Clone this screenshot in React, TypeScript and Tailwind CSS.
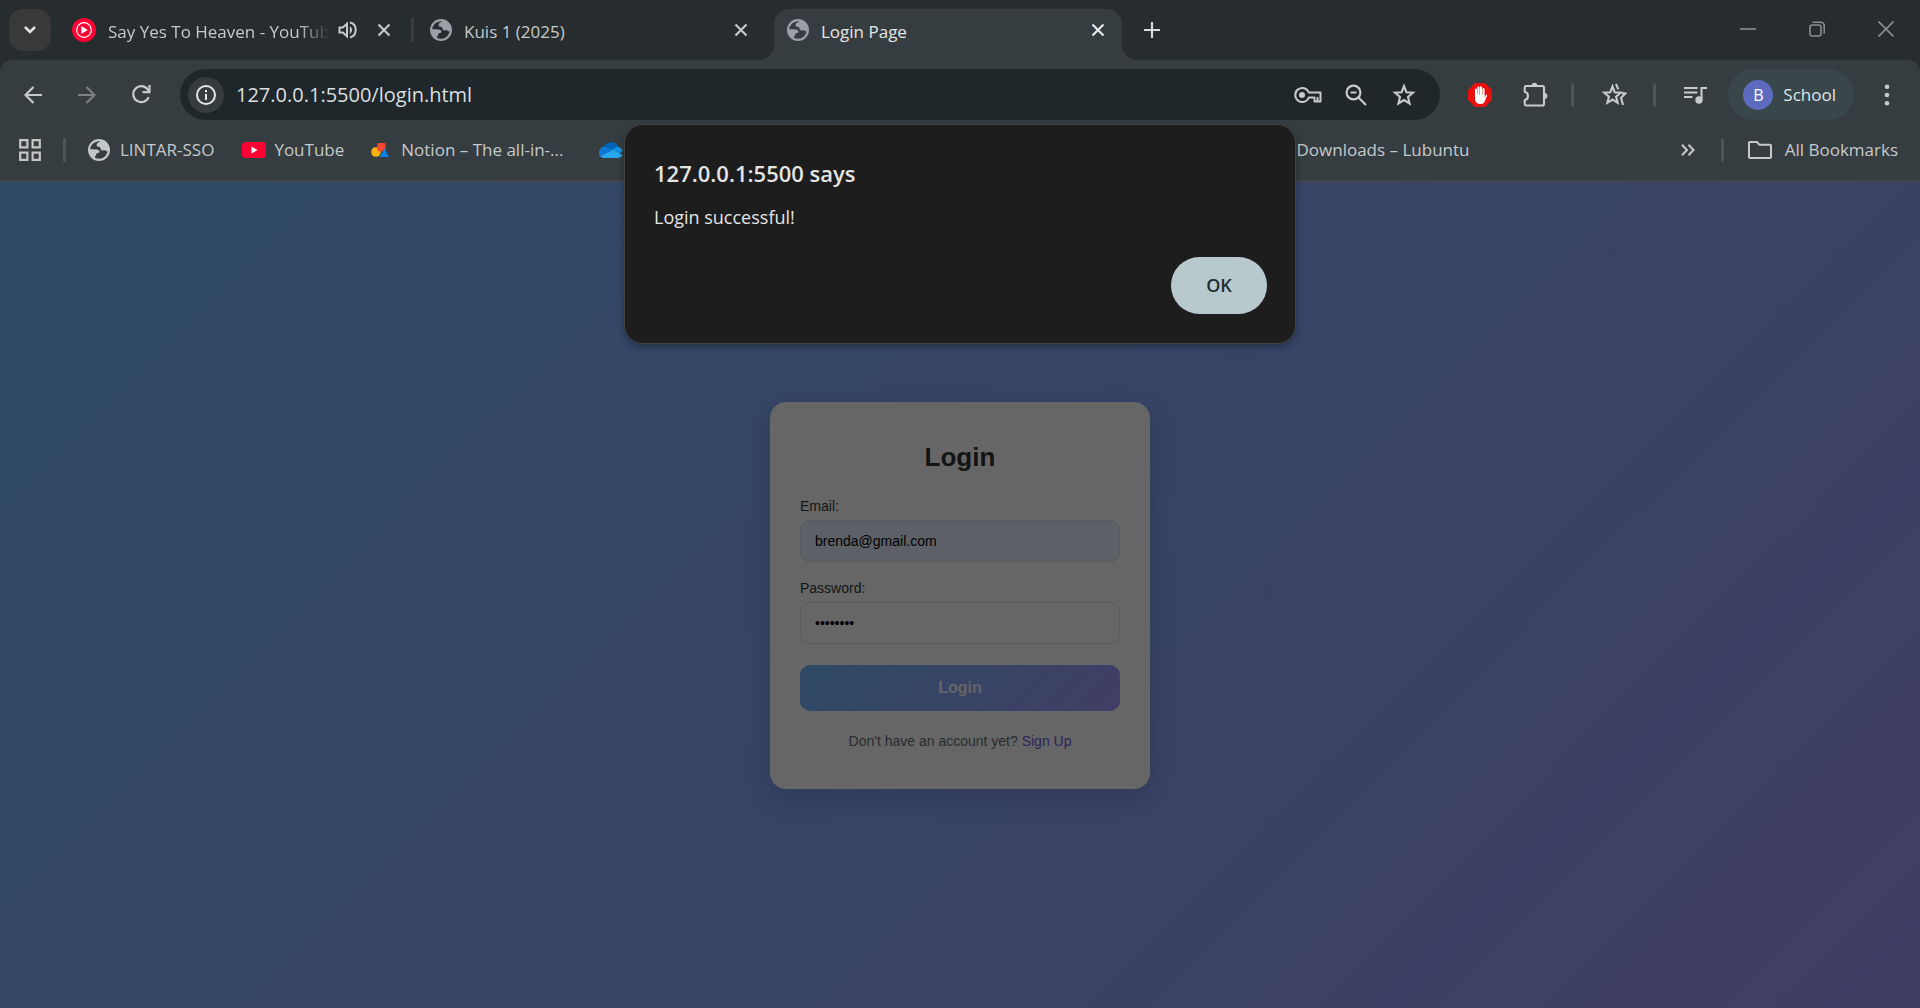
import type { ReactNode } from 'react'

type IconProps = { className?: string }

const Globe = ({ className = '' }: IconProps) => (
  <svg viewBox="0 0 22 22" className={`size-[22px] shrink-0 ${className}`} fill="currentColor" aria-hidden="true">
    <circle cx="11" cy="11" r="9.900" fill="none" stroke="currentColor" strokeWidth="2.200" />
    <path d="M12.500 1.500C12.300 3.300 9 3.500 8.600 5.600 8.300 7.600 9.800 8 11.300 8c1.500 0 .7 2.600 2.700 3.400 1.300.5 2.700-.6 3.500.3.500.6 1.500.9 3 .8A9.800 9.800 0 0 0 12.500 1.500Z" />
    <path d="M1.500 10.200h4.800c2.900 0 5.200.8 5.200 2.400 0 1.300-1.200 1.500-2.400 1.700-1.300.2-.4 2-1.600 2.600-.8.4-.4 2 0 3.200A9.800 9.800 0 0 1 1.500 10.200Z" />
  </svg>
)

const Close = ({ className = '' }: IconProps) => (
  <svg viewBox="0 0 14 14" className={`size-[14px] ${className}`} stroke="currentColor" strokeWidth="2.200" aria-hidden="true">
    <path d="M1.500 1.500l11 11M12.500 1.500l-11 11" />
  </svg>
)

const Arrow = ({ className = '' }: IconProps) => (
  <svg viewBox="0 0 18 18" className={`size-[18px] ${className}`} fill="none" stroke="currentColor" strokeWidth="2.200" aria-hidden="true">
    <path d="M18 9H2M9.500 1 1.500 9l8 8" />
  </svg>
)

const Separator = () => <div className="h-6 w-[3px] shrink-0 rounded-full bg-[#4d5558]" />

function IconButton({ label, children, className = '' }: { label: string; children: ReactNode; className?: string }) {
  return (
    <button type="button" aria-label={label} className={`flex h-[51px] shrink-0 items-center justify-center text-[#c5cbcd] ${className}`}>
      {children}
    </button>
  )
}

function TabStrip() {
  return (
    <div className="flex h-[60px] bg-[#272c2f] text-[17px] leading-6 text-[#c5cacb]">
      <button type="button" aria-label="Search tabs" className="mt-[9px] ml-[9px] flex size-[42px] shrink-0 items-center justify-center rounded-[14px] bg-[#3a3939] text-[#e4e4e4]">
        <svg viewBox="0 0 12 8" className="h-2 w-3" fill="none" stroke="currentColor" strokeWidth="2.500" aria-hidden="true">
          <path d="M1 1l5 5 5-5" />
        </svg>
      </button>
      <div className="ml-[9px] flex h-[60px] min-w-0 basis-[351px] items-center pr-5 pl-3">
        <svg viewBox="0 0 24 24" className="size-6 shrink-0" aria-hidden="true">
          <circle cx="12" cy="12" r="12" fill="#ff0033" />
          <circle cx="12" cy="12" r="7.300" fill="none" stroke="#fff" strokeWidth="1.200" />
          <path d="M9.300 8v8l6.400-4z" fill="#fff" />
        </svg>
        <span className="ml-3 min-w-0 flex-1 overflow-hidden pt-1 whitespace-nowrap [mask-image:linear-gradient(to_right,black_86%,transparent)]">
          Say Yes To Heaven - YouTub
        </span>
        <button type="button" aria-label="Mute tab" className="ml-2">
          <svg viewBox="0 0 20 18" className="h-[18px] w-5" fill="none" stroke="currentColor" strokeWidth="2" aria-hidden="true">
            <path d="M1.500 6.500v5h3.300L9 15.200V2.800L4.800 6.500z" />
            <path d="M11.800 5.300c1.600 1 2.300 2.300 2.300 3.700s-.7 2.700-2.300 3.700z" fill="currentColor" stroke="none" />
            <path d="M12 1.600c3.600.8 5.700 3.800 5.700 7.400s-2.100 6.600-5.700 7.400" />
          </svg>
        </button>
        <button type="button" aria-label="Close tab" className="ml-[19px]">
          <Close />
        </button>
      </div>
      <div className="mt-[18px] h-6 w-[3px] shrink-0 bg-[#3d3b3c]" />
      <div className="flex h-[60px] min-w-0 basis-[360px] items-center pr-[26px] pl-4">
        <Globe className="text-[#9aa0a6]" />
        <span className="ml-3 min-w-0 flex-1 truncate pt-1">Kuis 1 (2025)</span>
        <button type="button" aria-label="Close tab">
          <Close />
        </button>
      </div>
      <div className="relative mt-[9px] flex h-[51px] min-w-0 basis-[348px] items-center rounded-t-[15px] bg-[#353d40] pr-[17px] pb-[9px] pl-[13px] text-[#e6e6e6]">
        <div className="absolute bottom-0 -left-[15px] size-[15px] bg-[radial-gradient(circle_at_0_0,transparent_15px,#353d40_15px)]" />
        <div className="absolute -right-[15px] bottom-0 size-[15px] bg-[radial-gradient(circle_at_100%_0,transparent_15px,#353d40_15px)]" />
        <Globe className="text-[#9aa0a6]" />
        <span className="ml-3 min-w-0 flex-1 truncate pt-1">Login Page</span>
        <button type="button" aria-label="Close tab">
          <Close />
        </button>
      </div>
      <button type="button" aria-label="New tab" className="ml-[9px] flex h-[60px] w-[42px] shrink-0 items-center justify-center text-[#d5d9da]">
        <svg viewBox="0 0 16 16" className="size-4" stroke="currentColor" strokeWidth="2.200" aria-hidden="true">
          <path d="M8 0v16M0 8h16" />
        </svg>
      </button>
      <div className="ml-auto flex h-[58px] text-[#8b8e8f]">
        <button type="button" aria-label="Minimize" className="flex w-[69px] items-center justify-center">
          <svg viewBox="0 0 16 16" className="size-4" stroke="currentColor" strokeWidth="1.600" aria-hidden="true">
            <path d="M0 8h16" />
          </svg>
        </button>
        <button type="button" aria-label="Restore" className="flex w-[69px] items-center justify-center">
          <svg viewBox="0 0 16 16" className="size-4" fill="none" stroke="currentColor" strokeWidth="1.600" aria-hidden="true">
            <rect x="1" y="4" width="11" height="11" rx="2.200" />
            <path d="M3.500 1.200h8.300a3.400 3.400 0 0 1 3.400 3.400V12.500" />
          </svg>
        </button>
        <button type="button" aria-label="Close window" className="flex w-[69px] items-center justify-center">
          <svg viewBox="0 0 16 16" className="size-4" stroke="currentColor" strokeWidth="1.600" aria-hidden="true">
            <path d="M.5.5l15 15M15.500.5l-15 15" />
          </svg>
        </button>
      </div>
    </div>
  )
}

function Toolbar() {
  return (
    <div className="flex items-center px-[6px] pt-[9px]">
      <IconButton label="Back" className="w-[54px]">
        <Arrow />
      </IconButton>
      <IconButton label="Forward" className="w-[54px]">
        <Arrow className="rotate-180 text-[#7c8284]" />
      </IconButton>
      <IconButton label="Reload" className="w-[54px]">
        <svg viewBox="0 0 19 19" className="size-[19px]" fill="none" stroke="currentColor" strokeWidth="2.200" aria-hidden="true">
          <path d="M16.700 12.200A8 8 0 1 1 15.600 4.200L17 6" />
          <path d="M17.500 0v7.100h-7" />
        </svg>
      </IconButton>
      <div className="ml-3 flex h-[51px] min-w-0 flex-1 items-center rounded-full bg-[#1f272a] pr-3 pl-2">
        <button type="button" aria-label="View site information" className="flex size-9 shrink-0 items-center justify-center rounded-full bg-[#353c40] text-[#e3e5e6]">
          <svg viewBox="0 0 20 20" className="size-5" fill="none" stroke="currentColor" strokeWidth="2" aria-hidden="true">
            <circle cx="10" cy="10" r="9" />
            <path d="M10 9v6M10 5v2.200" />
          </svg>
        </button>
        <input
          aria-label="Address"
          defaultValue="127.0.0.1:5500/login.html"
          className="ml-3 min-w-0 flex-1 bg-transparent text-[20px] leading-7 text-[#dcdfe0] outline-none"
        />
        <IconButton label="Manage passwords" className="w-12">
          <svg viewBox="0 0 28 18" className="h-[18px] w-7" fill="none" stroke="currentColor" strokeWidth="2" aria-hidden="true">
            <path d="M14.800 6.500A7 7 0 1 0 14.800 11.500H20.500V15.500H26.500V6.500Z" strokeLinejoin="round" />
            <circle cx="8" cy="9" r="3" fill="currentColor" stroke="none" />
            <path d="M23.500 11v4" />
          </svg>
        </IconButton>
        <IconButton label="Zoom" className="w-12">
          <svg viewBox="0 0 22 22" className="size-[22px]" fill="none" stroke="currentColor" strokeWidth="2.200" aria-hidden="true">
            <circle cx="8.500" cy="8.500" r="6.900" />
            <path d="M13.500 13.500l7.500 7.500M5.500 8.500h6" />
          </svg>
        </IconButton>
        <IconButton label="Bookmark this tab" className="w-12">
          <svg viewBox="0 0 24 24" className="size-6" fill="none" stroke="currentColor" strokeWidth="2.100" aria-hidden="true">
            <path d="M12 3.200l2.400 6 6.600.5-5 4.300 1.600 6.500-5.600-3.500-5.600 3.500L8 14 3 9.700l6.600-.5z" />
          </svg>
        </IconButton>
      </div>
      <IconButton label="AdBlock" className="ml-[13px] w-[54px]">
        <svg viewBox="0 0 24 24" className="size-6" aria-hidden="true">
          <path d="M7 0h10l7 7v10l-7 7H7l-7-7V7z" fill="#e8110f" />
          <g stroke="#fff" strokeLinecap="round" strokeWidth="2.100">
            <path d="M8 14V6.500M10.500 12V4.500M13 12V4.300M15.500 13V6" />
          </g>
          <path d="M7 11.500h9.500v3l1.300-2.300c.5-.8 1.600-.4 1.300.5L16.600 18.500c-.8 1.800-2 2.500-4.100 2.500C8.700 21 7 18.500 7 15.500z" fill="#fff" />
        </svg>
      </IconButton>
      <IconButton label="Extensions" className="w-14">
        <svg viewBox="0 0 25 25" className="size-[25px]" fill="none" stroke="currentColor" strokeWidth="2.100" aria-hidden="true">
          <path d="M3.200 4H19.500Q21 4 21 5.500V22Q21 23.500 19.500 23.500H3.200Q1.700 23.500 1.700 22V18.200C6 17.200 6 10.800 1.700 9.800V5.500Q1.700 4 3.200 4Z" strokeLinejoin="round" />
          <path d="M8.700 3.500a2.800 2.800 0 0 1 5.600 0zM21.500 11a2.900 2.900 0 0 1 0 5.800z" fill="currentColor" stroke="none" />
        </svg>
      </IconButton>
      <div className="ml-2">
        <Separator />
      </div>
      <IconButton label="Saved tab groups" className="ml-[13px] w-[54px]">
        <svg viewBox="0 0 26 24" className="h-6 w-[26px]" fill="none" stroke="currentColor" strokeWidth="2.100" aria-hidden="true">
          <path d="M11.500 3.500l2.200 5.700 6.100.5-4.700 4 1.500 6.100-5.100-3.300-5.100 3.300 1.500-6.100-4.700-4 6.100-.5z" />
          <path d="M15 1l2.300 5.300M20.800 10.200l3.500.3-4.200 4.200 1.900 7.300" />
        </svg>
      </IconButton>
      <div className="ml-3">
        <Separator />
      </div>
      <IconButton label="Media controls" className="ml-3 w-[54px]">
        <svg viewBox="0 0 24 20" className="h-5 w-6" fill="none" stroke="currentColor" strokeWidth="2.100" aria-hidden="true">
          <path d="M1 3h13.500M1 7.500h13.500M1 12h8.500M18.500 15V3H24" />
          <circle cx="16" cy="15" r="3.700" fill="currentColor" stroke="none" />
        </svg>
      </IconButton>
      <button type="button" className="ml-[6px] flex h-[51px] shrink-0 items-center rounded-full bg-[#39474a] pr-[18px] pl-[15px] text-[17px] leading-6 text-[#dde6e8]">
        <span className="mr-[10px] flex size-[30px] items-center justify-center rounded-full bg-[#5c6bc0] text-base text-white">B</span>
        School
      </button>
      <IconButton label="Menu" className="ml-[6px] w-[54px]">
        <svg viewBox="0 0 6 22" className="h-[22px] w-[6px]" fill="currentColor" aria-hidden="true">
          <circle cx="3" cy="2.800" r="2.300" />
          <circle cx="3" cy="11" r="2.300" />
          <circle cx="3" cy="19.200" r="2.300" />
        </svg>
      </IconButton>
    </div>
  )
}

function Bookmark({ icon, children, className = '' }: { icon?: ReactNode; children?: ReactNode; className?: string }) {
  return (
    <a href="#" className={`flex shrink-0 items-center ${className}`}>
      {icon}
      {children}
    </a>
  )
}

function BookmarksBar() {
  return (
    <nav aria-label="Bookmarks" className="flex h-[60px] items-center overflow-hidden pr-[22px] pl-[19px] text-[17px] leading-6 whitespace-nowrap text-[#c5c9ca]">
      <button type="button" aria-label="Apps" className="mr-[22px] text-[#c8c6c5]">
        <svg viewBox="0 0 22 22" className="size-[22px]" fill="none" stroke="currentColor" strokeWidth="2.200" aria-hidden="true">
          <path d="M1.200 1.200h7.200v7.200H1.200zM13.600 1.200h7.200v7.200h-7.200zM1.200 13.600h7.200v7.200H1.200zM13.600 13.600h7.200v7.200h-7.200z" />
        </svg>
      </button>
      <Separator />
      <Bookmark className="ml-[22px] gap-[10px]" icon={<Globe className="text-[#c3c6cb]" />}>
        LINTAR-SSO
      </Bookmark>
      <Bookmark
        className="ml-7 gap-2"
        icon={
          <svg viewBox="0 0 24 16" className="h-4 w-6" aria-hidden="true">
            <rect width="24" height="16" rx="3.500" fill="#ff0033" />
            <path d="M9.500 4.500v7l6-3.500z" fill="#fff" />
          </svg>
        }
      >
        YouTube
      </Bookmark>
      <Bookmark
        className="ml-[27px] gap-3"
        icon={
          <svg viewBox="0 0 18 16" className="h-4 w-[18px]" aria-hidden="true">
            <circle cx="5" cy="10" r="4.800" fill="#ffb110" />
            <rect x="6.300" y="1" width="8.200" height="8.200" rx="1" fill="#f64932" />
            <path d="M13.500 6.500 18 15H8.500z" fill="#097fe8" />
          </svg>
        }
      >
        Notion – The all-in-...
      </Bookmark>
      <Bookmark
        className="ml-9"
        icon={
          <svg viewBox="0 0 24 16" className="h-4 w-6" role="img" aria-label="OneDrive">
            <path d="M4.500 6A8 8 0 0 1 19.500 5L15 11z" fill="#0364b8" />
            <path d="M0 11a5.500 5.500 0 0 1 8-5.500L18 11 4 16A5 5 0 0 1 0 11z" fill="#0f78d4" />
            <path d="M12 8l6-3a5.300 5.300 0 0 1 5.500 4L20 12z" fill="#1490df" />
            <path d="M1.500 14 14 8.300 23.500 13A4.500 4.500 0 0 1 19.500 16H5.200A5 5 0 0 1 1.500 14z" fill="#28a8ea" />
          </svg>
        }
      />
      <Bookmark className="ml-[673px]">Downloads – Lubuntu</Bookmark>
      <button type="button" aria-label="More bookmarks" className="mr-[26px] ml-auto">
        <svg viewBox="0 0 14 12" className="h-3 w-[14px]" fill="none" stroke="currentColor" strokeWidth="2" aria-hidden="true">
          <path d="M1 .8 6 6l-5 5.200M7.500.8l5 5.200-5 5.200" />
        </svg>
      </button>
      <Separator />
      <Bookmark
        className="ml-6 gap-[13px]"
        icon={
          <svg viewBox="0 0 24 18" className="h-[18px] w-6" fill="none" stroke="currentColor" strokeWidth="2" strokeLinejoin="round" aria-hidden="true">
            <path d="M1 1.800Q1 1 1.800 1H9l2.500 2.800H22Q23 3.800 23 4.600V16Q23 17 22 17H2Q1 17 1 16z" />
          </svg>
        }
      >
        All Bookmarks
      </Bookmark>
    </nav>
  )
}

function LoginForm() {
  return (
    <form className="flex w-[380px] flex-col rounded-2xl bg-[#666666] px-[30px] py-10 text-sm leading-4 text-[#121516] shadow-[0_8px_24px_rgba(0,0,0,0.15)]">
      <h1 className="mb-[26px] text-center text-[26px] leading-[30px] font-bold">Login</h1>
      <label htmlFor="email" className="mb-[6px]">
        Email:
      </label>
      <input id="email" type="email" defaultValue="brenda@gmail.com" className="mb-[18px] h-[42px] rounded-[10px] border border-[#555b5e] bg-[#5d6066] px-[14px] text-black outline-none" />
      <label htmlFor="password" className="mb-[6px]">
        Password:
      </label>
      <input id="password" type="password" defaultValue="password" className="mb-[21px] h-[42px] rounded-[10px] border border-[#555b5e] bg-[#666666] px-[14px] text-black outline-none" />
      <button type="button" className="h-[46px] rounded-[10px] bg-[linear-gradient(135deg,#2e4a66,#413e66)] text-base font-bold text-[#666666]">
        Login
      </button>
      <p className="mt-[22px] text-center text-[#282c2e]">
        Don't have an account yet?{' '}
        <a href="#" className="text-[#2b255c]">
          Sign Up
        </a>
      </p>
    </form>
  )
}

function AlertDialog() {
  return (
    <div
      role="alertdialog"
      aria-labelledby="alert-title"
      aria-describedby="alert-text"
      className="absolute top-[124px] left-1/2 flex w-[672px] -translate-x-1/2 flex-col rounded-[19px] border border-[#404445] bg-[#1c1d1c] pt-8 pr-7 pb-[29px] pl-[29px] text-[#e4e4e4] shadow-[0_3px_6px_rgba(0,0,0,0.3)]"
    >
      <h2 id="alert-title" className="text-[22px] leading-8 font-semibold">
        127.0.0.1:5500 says
      </h2>
      <p id="alert-text" className="mt-4 text-[18px] leading-6">
        Login successful!
      </p>
      <button type="button" className="mt-7 h-[57px] w-24 self-end rounded-full bg-[#b8c9ce] text-[18px] font-semibold text-[#1d2f35]">
        OK
      </button>
    </div>
  )
}

export default function App() {
  return (
    <div className="relative flex min-h-screen flex-col overflow-hidden font-['Open_Sans',sans-serif]">
      <header className="bg-[#272c2f]">
        <TabStrip />
        <div className="rounded-t-[12px] border-b-2 border-[#42444a] bg-[#353d40]">
          <Toolbar />
          <BookmarksBar />
        </div>
      </header>
      <main className="flex flex-1 items-center justify-center bg-[linear-gradient(135deg,#2e4a66,#413e66)] pt-px font-['Liberation_Sans',Arial,sans-serif]">
        <LoginForm />
      </main>
      <AlertDialog />
    </div>
  )
}
